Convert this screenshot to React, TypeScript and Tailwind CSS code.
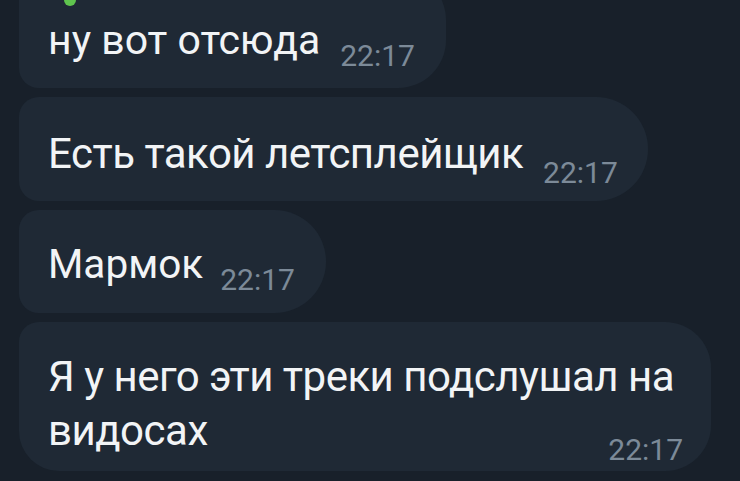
import React from "react";

const font = { fontFamily: "Roboto, 'Noto Sans', sans-serif" };

export default function App() {
  return (
    <div
      className="w-[740px] h-[481px] overflow-hidden bg-[#18202a] flex flex-col items-start gap-[9px] pl-[19px]"
      style={font}
    >
      {/* bubble 1 */}
      <div className="relative mt-[-28px] flex items-end rounded-tl-[20px] rounded-bl-[20px] rounded-r-[48px] bg-[#1f2935] pl-[29px] pr-[31px] pt-[44px] pb-[24px]">
        <span className="absolute left-[45px] top-[22px] h-[12px] w-[12px] rounded-full bg-[#5fc44e]" />
        <span className="text-[41px] leading-[48px] text-[#f2f4f6]">ну вот отсюда</span>
        <span className="ml-[20px] mb-[-9px] text-[30px] leading-[34px] text-[#7c8a98]">22:17</span>
      </div>

      {/* bubble 2 */}
      <div className="flex items-end rounded-l-[20px] rounded-r-[52px] bg-[#1f2935] pl-[29px] pr-[30px] pt-[33px] pb-[23px]">
        <span className="text-[42px] leading-[48px] tracking-[-0.5px] text-[#f2f4f6]">Есть такой летсплейщик</span>
        <span className="ml-[20px] mb-[-12px] text-[30px] leading-[34px] text-[#7c8a98]">22:17</span>
      </div>

      {/* bubble 3 */}
      <div className="flex items-end rounded-l-[20px] rounded-r-[52px] bg-[#1f2935] pl-[29px] pr-[31px] pt-[30px] pb-[25px]">
        <span className="text-[40.5px] leading-[48px] text-[#f2f4f6]">Мармок</span>
        <span className="ml-[17px] mb-[-9px] text-[30px] leading-[34px] text-[#7c8a98]">22:17</span>
      </div>

      {/* bubble 4 */}
      <div className="flex w-[692px] flex-col rounded-tl-[20px] rounded-bl-[40px] rounded-r-[46px] bg-[#1f2935] pl-[29px] pr-[28px] pt-[28px] pb-[13px]">
        <p className="text-[42px] leading-[54px] tracking-[-0.5px] text-[#f2f4f6]">
          Я у него эти треки подслушал на
        </p>
        <div className="flex items-end justify-between">
          <span className="text-[42px] leading-[54px] tracking-[-0.5px] text-[#f2f4f6]">видосах</span>
          <span className="mb-[-9px] text-[30px] leading-[34px] text-[#7c8a98]">22:17</span>
        </div>
      </div>
    </div>
  );
}
